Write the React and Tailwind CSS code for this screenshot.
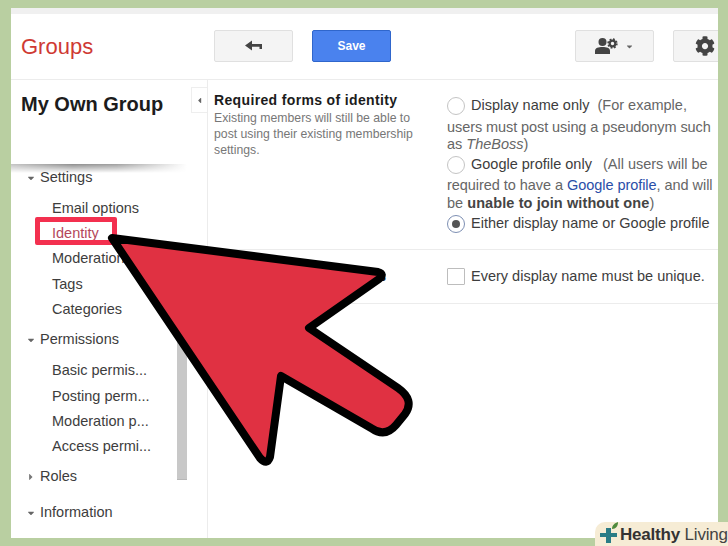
import React from "react";
import { FaCog, FaCaretDown, FaCaretRight, FaCaretLeft } from "react-icons/fa";

const SubItem = ({ children, active }) => (
  <div className={`h-[25.3px] pl-[41px] flex items-center text-[14.5px] whitespace-nowrap ${active ? "text-[#b4475a]" : "text-[#3d3d3d]"}`}>
    {children}
  </div>
);

const Section = ({ label, open = true, className = "" }) => (
  <div className={`flex items-center h-[25px] pl-[15px] text-[14.5px] text-[#3d3d3d] ${className}`}>
    {open ? <FaCaretDown className="w-[10px] h-[10px] text-[#666]" /> : <FaCaretRight className="w-[10px] h-[10px] text-[#777]" />}
    <span className="ml-[4px]">{label}</span>
  </div>
);

const Radio = ({ checked }) => (
  <span className={`w-[18px] h-[18px] mr-[6px] rounded-full border shrink-0 flex items-center justify-center ${checked ? "border-[#7d8fb3]" : "border-[#c4c4c4]"}`}>
    {checked && <span className="w-[8px] h-[8px] rounded-full bg-[#555]" />}
  </span>
);

const HeaderButton = ({ children, className = "" }) => (
  <button className={`h-[32px] rounded-[2px] border border-[#e0e0e0] bg-[#f4f4f4] flex items-center justify-center shrink-0 ${className}`}>
    {children}
  </button>
);

export default function App() {
  return (
    <div className="relative w-[728px] h-[546px] overflow-hidden bg-[#b9cfa1] pt-[8px] pl-[11px] pr-[10px] pb-[8px] font-['Liberation_Sans',Arial,sans-serif]">
      <div className="h-full flex flex-col bg-white overflow-hidden">
        <div className="h-[6px] bg-[#f0f0f0] shrink-0" />

        {/* top bar */}
        <div className="h-[66px] shrink-0 border-b border-[#ececec] flex items-center pb-[1px]">
          <div className="w-[203px] pl-[10px] text-[22px] text-[#cf3a34] shrink-0">Groups</div>
          <HeaderButton className="w-[79px]">
            <svg width="18" height="12" viewBox="0 0 18 12">
              <path d="M0 5.5 L7 0.5 V4 H17 V9 H14.5 V6.8 H7 V10.5 Z" fill="#444" />
            </svg>
          </HeaderButton>
          <button className="ml-[19px] w-[79px] h-[32px] rounded-[2px] border border-[#2f66cc] bg-[#4a82ee] text-white text-[12px] font-bold shrink-0">Save</button>
          <div className="flex-1" />
          <HeaderButton className="w-[79px] gap-[7px] -ml-[1px] mr-[1px]">
            <svg width="23" height="16" viewBox="0 0 23 16">
              <circle cx="7.5" cy="4" r="4" fill="#444" />
              <path d="M0 16 V12.5 C0 10 3.5 9 7.5 9 C11.5 9 15 10 15 12.5 V16 Z" fill="#444" />
              <circle cx="17.5" cy="5.5" r="2.8" fill="none" stroke="#444" strokeWidth="2.2" />
              <circle cx="17.5" cy="5.5" r="4.4" fill="none" stroke="#444" strokeWidth="1.6" strokeDasharray="1.8 1.65" />
            </svg>
            <FaCaretDown className="w-[9px] h-[9px] text-[#666]" />
          </HeaderButton>
          <HeaderButton className="ml-[18px] w-[80px] justify-start pl-[21px] -mr-[35px]">
            <FaCog className="w-[20px] h-[20px] text-[#444]" />
          </HeaderButton>
        </div>

        <div className="flex-1 flex min-h-0">
          {/* sidebar */}
          <div className="relative w-[197px] shrink-0 border-r border-[#ececec] flex flex-col">
            <div className="h-[84px] shrink-0 pl-[10px] pt-[11px] text-[20px] leading-[26px] font-bold text-[#1c1c1c]">My Own Group</div>
            <button className="absolute right-0 top-[7px] w-[16px] h-[26px] bg-white border border-r-0 border-[#eeeeee] flex items-center justify-center">
              <FaCaretLeft className="w-[9px] h-[9px] text-[#666]" />
            </button>
            <div className="absolute left-0 top-[84px] h-[9px] w-[176px] bg-[linear-gradient(90deg,#c4c4c4,#8e8e8e_35%,#a0a0a0_60%,#fff)] [mask-image:linear-gradient(180deg,#000,transparent)]" />
            <div className="flex-1 flex min-h-0 pt-[1px]">
              <div className="w-[166px] shrink-0">
                <Section label="Settings" />
                <div className="pt-[6px]">
                  <SubItem>Email options</SubItem>
                  <SubItem active>Identity</SubItem>
                  <SubItem>Moderation</SubItem>
                  <SubItem>Tags</SubItem>
                  <SubItem>Categories</SubItem>
                </div>
                <Section label="Permissions" className="mt-[5px]" />
                <div className="pt-[6px]">
                  <SubItem>Basic permis...</SubItem>
                  <SubItem>Posting perm...</SubItem>
                  <SubItem>Moderation p...</SubItem>
                  <SubItem>Access permi...</SubItem>
                </div>
                <Section label="Roles" open={false} className="mt-[5px]" />
                <Section label="Information" className="mt-[11px]" />
              </div>
              <div className="w-[10px] h-[200px] mt-[115px] bg-[#c8c8c8] border-b border-[#b8b8b8]" />
            </div>
          </div>

          {/* settings content */}
          <div className="flex-1 min-w-0">
            <div className="h-[170px] border-b border-[#ececec] flex">
              <div className="w-[239px] shrink-0 pl-[6px] pt-[12px]">
                <div className="text-[14px] leading-[17px] font-bold text-[#1c1c1c] tracking-[0.35px]">Required forms of identity</div>
                <div className="text-[12.25px] leading-[16px] text-[#777] mt-[1px] w-[215px]">
                  Existing members will still be able to post using their existing membership settings.
                </div>
              </div>
              <div className="flex-1 text-[14.5px] text-[#666] whitespace-nowrap pt-[17px]">
                <div className="flex items-center h-[18px]">
                  <Radio />
                  <span className="text-[#3d3d3d]">Display name only</span>
                  <span className="ml-[8px]">(For example,</span>
                </div>
                <div className="leading-[17px] mt-[4px] tracking-[-0.08px]">users must post using a pseudonym such</div>
                <div className="leading-[17px]">as <i>TheBoss</i>)</div>
                <div className="flex items-center h-[18px] mt-[3px]">
                  <Radio />
                  <span className="text-[#3d3d3d]">Google profile only</span>
                  <span className="ml-[11px]">(All users will be</span>
                </div>
                <div className="leading-[17px] mt-[3px] tracking-[-0.05px]">required to have a <span className="text-[#2a4ea8]">Google profile</span>, and will</div>
                <div className="leading-[17px] mt-[1px]">be <b className="text-[#444] tracking-[0.1px]">unable to join without one</b>)</div>
                <div className="flex items-center h-[18px] mt-[3px] text-[#3d3d3d]">
                  <Radio checked />
                  <span>Either display name or Google profile</span>
                </div>
              </div>
            </div>
            <div className="h-[54px] border-b border-[#ececec] flex items-center">
              <div className="w-[239px] shrink-0 pl-[6px] text-[14px] font-bold text-[#1c1c1c] whitespace-nowrap">Display name uniqueness</div>
              <span className="w-[18px] h-[17px] border border-[#bdbdbd] rounded-[1px] mr-[6px]" />
              <span className="text-[14.5px] text-[#3d3d3d] whitespace-nowrap">Every display name must be unique.</span>
            </div>
          </div>
        </div>
      </div>

      {/* highlight box around Identity */}
      <div className="absolute left-[35px] top-[217px] w-[82px] h-[28px] border-[5px] border-[#f3304f] rounded-[2px]" />

      {/* big arrow */}
      <svg className="absolute left-0 top-0 pointer-events-none" width="728" height="546" viewBox="0 0 728 546">
        <path
          d="M112 238 L378 272 Q385 274 379 279 L309 328 L398 388 Q415 400 405 414 L396 425 Q385 438 371 428 L281 376 L270 457 Q267 466 260 458 Z"
          fill="#e03142"
          stroke="#000"
          strokeWidth="8"
          strokeLinejoin="round"
        />
      </svg>

      {/* watermark */}
      <div className="absolute right-0 bottom-0 w-[133px] h-[24px] bg-[#f6ecd5] rounded-tl-[10px] flex items-center pl-[4px]">
        <svg width="20" height="22" viewBox="0 0 20 22" className="shrink-0 -mt-[2px]">
          <path d="M7 6 H12 V11 H18 V15 H12 V21 H7 V15 H1 V11 H7 Z" fill="#2a7c86" />
          <path d="M13 7 C13 3 16 1 19 0 C19 4 17 7 13 7 Z" fill="#4f8a3c" />
        </svg>
        <span className="ml-[1px] text-[17px] leading-none tracking-[-0.2px] text-[#333] whitespace-nowrap">
          <b>Healthy</b> <span className="text-[#444]">Living</span>
        </span>
      </div>
    </div>
  );
}
